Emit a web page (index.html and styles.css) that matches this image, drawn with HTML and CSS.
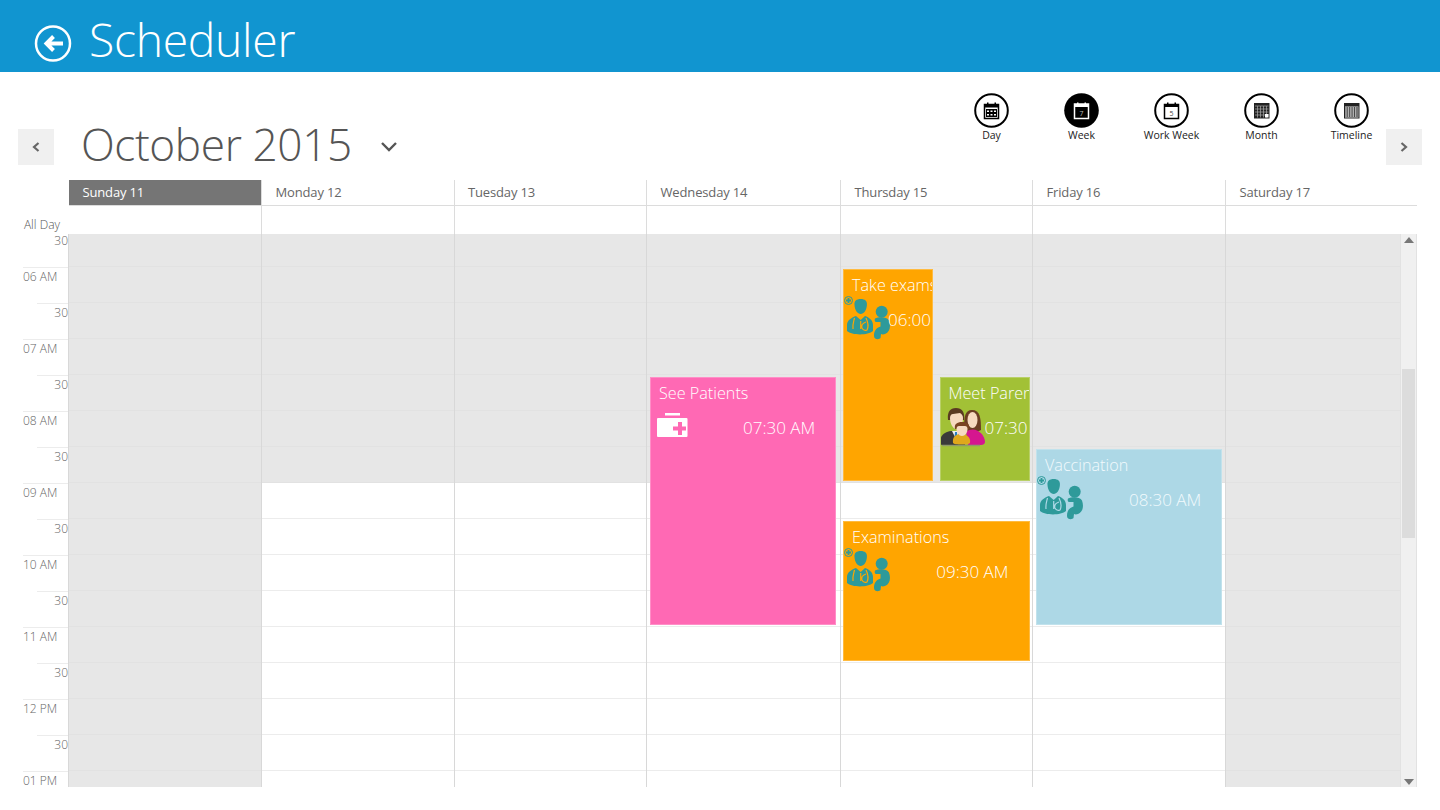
FILE: index.html
```html
<!DOCTYPE html>
<html lang="en">
<head>
<meta charset="utf-8">
<title>Scheduler</title>
<link rel="stylesheet" href="styles.css">
</head>
<body>
<svg class="defs" width="0" height="0" aria-hidden="true">
  <symbol id="doctor" viewBox="0 0 46 46">
    <circle cx="4.500" cy="4.500" r="4" fill="none" stroke="#2e9a9a" stroke-width="1"/>
    <path d="M4.500 2v5M2 4.500h5" stroke="#2e9a9a" stroke-width="1.800"/>
    <path d="M10.500 9C10 5 12.500 3 16.700 3s6.700 2 6.200 6c-.2 5-3 9-6.200 9s-6-4-6.200-9z" fill="#2e9a9a"/>
    <path d="M3 35v-6c0-5 5-7.500 9-9l4.700 4 4.300-4c4 1.500 8 4 8 9v6c-5 4.500-21 4.500-26 0z" fill="#2e9a9a"/>
    <path class="steth" d="M10.500 22c-1 4-2 6-1.500 11M16.700 25v8M22 22c2 4 3 8 1 12-2 1-4 0-5-2-1-3 1-5 4-6" fill="none" stroke-width="1.200"/>
    <circle cx="37.700" cy="15.700" r="6" fill="#2e9a9a"/>
    <path d="M31 22.500C35 20.500 43 20.500 45 24.500 47 30 46 36 41 38 39.500 38.500 38 38.500 37 38L36.500 42C35 44 30 43.500 30 40 30 35.500 31.500 32 36.500 30.500V26H32C30.500 25.500 30.500 23.500 31 22.500Z" fill="#2e9a9a"/>
  </symbol>
  <symbol id="family" viewBox="0 0 46 41">
    <path d="M24 24c0-14 1-20 8-20 8 0 9 8 9 20l-4 2H27z" fill="#6b3d23"/>
    <path d="M26 26c4-3 8-3 12-1 4 2 7 7 7 11 0 2-2 3-4 3H28z" fill="#d5168f"/>
    <ellipse cx="32.500" cy="14" rx="5" ry="8" fill="#f6d9c0"/>
    <path d="M0 36c0-7 5-10 11-11h10l4 5v9H3c-2 0-3-1-3-3z" fill="#3a3a3a"/>
    <path d="M12 25h8l-4 8z" fill="#f2f2f2"/>
    <path d="M15 26h2l.5 6-1.500 2-1.500-2z" fill="#2a7fc0"/>
    <path d="M8 14C7 6 10 2 16 2s9 4 8 12z" fill="#5a3a22"/>
    <path d="M10 12c0-2 1-4 3-4l7-1c2 1 3 3 3 5 0 6-3 11-6.500 11S10 18 10 12z" fill="#f6d9c0"/>
    <path d="M13 37c-1-6 3-9 8-9s10 3 9 9c-1 2-16 2-17 0z" fill="#e0a81c"/>
    <path d="M15 23c-1-5 2-7 7-7s8 2 7 7z" fill="#7a4422"/>
    <path d="M16.500 23c0-2 1-3 2.500-3h6c1.500 0 2.500 1 2.500 3 0 4-2.500 7-5.500 7s-5.500-3-5.500-7z" fill="#f6d9c0"/>
    <path d="M2 39.500h38" stroke="#8f9a6a" stroke-width="1.500"/>
  </symbol>
</svg>

<header class="app-bar">
  <svg class="back" viewBox="0 0 38 38" width="38" height="38" aria-hidden="true">
    <circle cx="19" cy="19.500" r="17" fill="none" stroke="#fff" stroke-width="2.500"/>
    <path d="M29 19.500H13M19.500 12.500l-7 7 7 7" fill="none" stroke="#fff" stroke-width="4"/>
  </svg>
  <h1 class="app-title">Scheduler</h1>
</header>

<section class="toolbar">
  <button class="nav-btn" type="button" aria-label="Previous">
    <svg viewBox="0 0 8 10" width="8" height="10"><path d="M6.500 1 2 5l4.500 4" fill="none" stroke="#666" stroke-width="2.200"/></svg>
  </button>
  <h2 class="month">October 2015</h2>
  <svg class="month-caret" viewBox="0 0 16 11" width="16" height="11" aria-hidden="true"><path d="M1 2l7 7 7-7" fill="none" stroke="#555" stroke-width="2.400"/></svg>
  <nav class="views">
    <div class="view">
      <svg viewBox="0 0 35 35" width="35" height="35"><circle cx="17.500" cy="17.500" r="16.300" fill="#fff" stroke="#000" stroke-width="2"/><path d="M10.500 11.500h14v14h-14z" fill="#fff" stroke="#000" stroke-width="1.500"/><path d="M10.500 11h14v3.500h-14zM13 9.500h1.500v2H13zM20.500 9.500H22v2h-1.500zM12 16h11v8H12z" fill="#000"/><path d="M13 17.500h2v1.500h-2zM16.500 17.500h2v1.500h-2zM20 17.500h2v1.500h-2zM13 21h2v1.500h-2zM16.500 21h2v1.500h-2zM20 21h2v1.500h-2z" fill="#fff"/></svg>
      <span class="view-label">Day</span>
    </div>
    <div class="view">
      <svg viewBox="0 0 35 35" width="35" height="35"><circle cx="17.500" cy="17.500" r="17.300" fill="#000"/><path d="M10.500 11h14v14.500h-14z" fill="#000" stroke="#fff" stroke-width="1.500"/><path d="M10 11h15v3H10zM13 9.500h1.500v2H13zM20.500 9.500H22v2h-1.500z" fill="#fff"/><text class="glyph-day is-on" x="17.500" y="22.500">7</text></svg>
      <span class="view-label">Week</span>
    </div>
    <div class="view">
      <svg viewBox="0 0 35 35" width="35" height="35"><circle cx="17.500" cy="17.500" r="16.300" fill="#fff" stroke="#000" stroke-width="2"/><path d="M10.500 11.500h14v14h-14z" fill="#fff" stroke="#000" stroke-width="1.500"/><path d="M10.500 11h14v3h-14zM13 9.500h1.500v2H13zM20.500 9.500H22v2h-1.500z" fill="#000"/><text class="glyph-day" x="17.500" y="22.500">5</text></svg>
      <span class="view-label">Work Week</span>
    </div>
    <div class="view">
      <svg viewBox="0 0 35 35" width="35" height="35"><circle cx="17.500" cy="17.500" r="16.300" fill="#fff" stroke="#000" stroke-width="2"/><path d="M10 10h15.500v15.500H10z" fill="#222"/><path d="M11 13h13.500M11 16h13.500M11 19h13.500M11 22h13.500M13.500 13v11.500M16.500 13v11.500M19.500 13v11.500M22.500 13v11.500" stroke="#aaa" stroke-width=".7"/><path d="M21 21h3.500v3.500H21z" fill="#fff"/></svg>
      <span class="view-label">Month</span>
    </div>
    <div class="view">
      <svg viewBox="0 0 35 35" width="35" height="35"><circle cx="17.500" cy="17.500" r="16.300" fill="#fff" stroke="#000" stroke-width="2"/><path d="M10 10h15.500v15.500H10z" fill="#222"/><path d="M11 13.500h13.500v11H11z" fill="#ddd"/><path d="M12 14v10M13.700 14v10M15.400 14v10M17.100 14v10M18.800 14v10M20.500 14v10M22.200 14v10M23.800 14v10" stroke="#222" stroke-width=".8"/></svg>
      <span class="view-label">Timeline</span>
    </div>
  </nav>
  <button class="nav-btn" type="button" aria-label="Next">
    <svg viewBox="0 0 8 10" width="8" height="10"><path d="M1.500 1 6 5 1.500 9" fill="none" stroke="#666" stroke-width="2.200"/></svg>
  </button>
</section>

<main class="calendar">
  <div class="corner"></div>
  <div class="day-head is-today">Sunday 11</div>
  <div class="day-head">Monday 12</div>
  <div class="day-head">Tuesday 13</div>
  <div class="day-head">Wednesday 14</div>
  <div class="day-head">Thursday 15</div>
  <div class="day-head">Friday 16</div>
  <div class="day-head span-2">Saturday 17</div>

  <div class="all-day-label">All Day</div>
  <div class="all-day"></div>
  <div class="all-day"></div>
  <div class="all-day"></div>
  <div class="all-day"></div>
  <div class="all-day"></div>
  <div class="all-day"></div>
  <div class="all-day span-2"></div>

  <div class="gutter">
    <div class="tick half first">30</div>
    <div class="tick">06 AM</div>
    <div class="tick half">30</div>
    <div class="tick">07 AM</div>
    <div class="tick half">30</div>
    <div class="tick">08 AM</div>
    <div class="tick half">30</div>
    <div class="tick">09 AM</div>
    <div class="tick half">30</div>
    <div class="tick">10 AM</div>
    <div class="tick half">30</div>
    <div class="tick">11 AM</div>
    <div class="tick half">30</div>
    <div class="tick">12 PM</div>
    <div class="tick half">30</div>
    <div class="tick end">01 PM</div>
  </div>

  <div class="day"><div class="off full"></div></div>
  <div class="day"><div class="off"></div></div>
  <div class="day"><div class="off"></div></div>
  <div class="day">
    <div class="off"></div>
    <article class="event pink see-patients">
      <div class="event-title">See Patients</div>
      <div class="event-row">
        <svg class="kit" viewBox="0 0 31 25" width="31" height="25" aria-hidden="true">
          <path d="M8 0h15v2.500H8z" fill="#fff"/>
          <path d="M1 5h28.500a1 1 0 0 1 1 1v17a1 1 0 0 1-1 1H1a1 1 0 0 1-1-1V6a1 1 0 0 1 1-1z" fill="#fff"/>
          <path d="M21 9h4v4.500h4v4h-4V22h-4v-4.500h-5v-4h5z" fill="#ff69b4"/>
        </svg>
        <span class="event-time">07:30 AM</span>
      </div>
    </article>
  </div>
  <div class="day">
    <div class="off"></div>
    <article class="event orange take-exams">
      <div class="event-title">Take exams</div>
      <div class="event-row">
        <svg class="pic" aria-hidden="true"><use href="#doctor"/></svg>
        <span class="event-time">06:00 AM</span>
      </div>
    </article>
    <article class="event green meet-parents">
      <div class="event-title">Meet Parents</div>
      <div class="event-row">
        <svg class="pic family" aria-hidden="true"><use href="#family"/></svg>
        <span class="event-time">07:30 AM</span>
      </div>
    </article>
    <article class="event orange examinations">
      <div class="event-title">Examinations</div>
      <div class="event-row">
        <svg class="pic" aria-hidden="true"><use href="#doctor"/></svg>
        <span class="event-time">09:30 AM</span>
      </div>
    </article>
  </div>
  <div class="day">
    <div class="off"></div>
    <article class="event blue vaccination">
      <div class="event-title">Vaccination</div>
      <div class="event-row">
        <svg class="pic" aria-hidden="true"><use href="#doctor"/></svg>
        <span class="event-time">08:30 AM</span>
      </div>
    </article>
  </div>
  <div class="day last"><div class="off full"></div></div>

  <div class="scrollbar" aria-hidden="true">
    <span class="arrow up"></span>
    <span class="thumb"></span>
    <span class="arrow down"></span>
  </div>
</main>
</body>
</html>
```

FILE: styles.css
```css
* { box-sizing: border-box; }

html, body { margin: 0; padding: 0; }

body {
  width: 1440px;
  height: 810px;
  overflow: hidden;
  background: #fff;
  font-family: "Open Sans", "Liberation Sans", sans-serif;
  color: #666;
}

.defs { position: absolute; }

/* App bar */
.app-bar {
  height: 72px;
  background: #1195d0;
  display: flex;
  align-items: flex-start;
  padding: 24px 0 0 34px;
}

.back { flex: none; }

.app-title {
  margin: -16px 0 0 17px;
  font-size: 46.3px;
  line-height: 64px;
  font-weight: 300;
  color: #fff;
  letter-spacing: -0.3px;
}

/* Toolbar */
.toolbar {
  height: 108px;
  display: flex;
  align-items: flex-start;
  padding: 0 18px;
}

.nav-btn {
  flex: none;
  width: 36px;
  height: 36px;
  margin-top: 57px;
  padding: 0;
  border: 0;
  background: #f0f0f0;
  display: flex;
  align-items: center;
  justify-content: center;
}

.month {
  margin: 42px 0 0 27px;
  font-size: 44.2px;
  line-height: 60px;
  font-weight: 300;
  color: #555;
  letter-spacing: -0.4px;
}

.month-caret {
  flex: none;
  margin: 69px 0 0 29px;
}

.views {
  margin-left: auto;
  margin-right: 0.5px;
  display: flex;
  gap: 22px;
  padding-top: 21px;
}

.view {
  width: 68px;
  display: flex;
  flex-direction: column;
  align-items: center;
}

.view svg { display: block; }

.view-label {
  margin-top: -1px;
  font-size: 10.5px;
  line-height: 16px;
  color: #222;
  white-space: nowrap;
}

.glyph-day {
  font-size: 7px;
  text-anchor: middle;
  fill: #444;
  font-family: "Open Sans", sans-serif;
}

.glyph-day.is-on { fill: #bbb; }

/* Calendar grid */
.calendar {
  width: 1417px;
  display: grid;
  grid-template-columns: 69px 193px 192.5px 192.5px 194px 192px 193px 174px 17px;
  grid-template-rows: 26px 28px 553px;
}

.span-2 { grid-column: span 2; }

.day-head {
  padding-left: 13.5px;
  border-right: 1px solid #dcdcdc;
  border-bottom: 1px solid #dcdcdc;
  font-size: 13px;
  line-height: 25px;
  letter-spacing: -0.15px;
  color: #666;
  white-space: nowrap;
}

.day-head.span-2 { border-right: 0; }

.day-head.is-today {
  background: #757575;
  color: #fff;
}

.all-day-label {
  padding: 11px 9px 0 0;
  font-size: 12px;
  font-weight: 300;
  line-height: 16px;
  color: #555;
  text-align: right;
}

.all-day { border-right: 1px solid #dcdcdc; }
.all-day.span-2 { border-right: 0; }

.gutter {
  border-right: 1px solid #d8d8d8;
  background: #fff;
}

.tick {
  height: 36px;
  margin-left: 23px;
  padding-top: 1px;
  border-top: 1px solid #ececec;
  font-size: 12px;
  font-weight: 300;
  line-height: 16px;
  color: #666;
  white-space: nowrap;
}

.tick.half {
  margin-left: 37px;
  text-align: right;
}

.tick.first {
  height: 33px;
  border-top: 0;
  padding-top: 0;
  line-height: 14px;
}

.tick.end { height: 16px; }

.day {
  position: relative;
  overflow: hidden;
  border-right: 1px solid #d8d8d8;
  background-color: #fff;
  background-image: linear-gradient(transparent 35px, #ececec 35px);
  background-size: 100% 36px;
  background-position: 0 -3px;
}

.day.last { border-right: 0; }

.off {
  height: 249px;
  background-color: #e7e7e7;
  background-image: linear-gradient(transparent 35px, #e2e2e2 35px);
  background-size: 100% 36px;
  background-position: 0 -3px;
}

.off.full { height: 100%; }

/* Events */
.event {
  position: absolute;
  overflow: hidden;
  border: 1px solid rgba(255, 255, 255, 0.25);
  color: #fff;
  --detail: #ffa500;
}

.pink { background: #ff69b4; }
.orange { background: #ffa500; }
.green { background: #a2c136; --detail: #a2c136; }
.blue { background: #add8e6; color: #f2fafd; --detail: #add8e6; }

.see-patients { left: 3px; top: 143px; width: 186px; height: 248px; }
.take-exams { left: 2px; top: 35px; width: 90px; height: 212px; }
.meet-parents { left: 98.5px; top: 143px; width: 90px; height: 104px; }
.examinations { left: 2px; top: 287px; width: 186.5px; height: 140px; }
.vaccination { left: 3px; top: 215px; width: 186px; height: 176px; }

.event-title {
  padding: 3px 0 0 8px;
  font-size: 16.2px;
  line-height: 24px;
  font-weight: 300;
  white-space: nowrap;
}

.event-row {
  display: grid;
  grid-template-columns: minmax(0, 1fr) minmax(0, 1fr);
  height: 50px;
}

.event-time {
  margin-top: 11px;
  font-size: 17px;
  line-height: 24px;
  font-weight: 300;
  white-space: nowrap;
}

.kit { margin: 8px 0 0 6px; display: block; }

.pic {
  display: block;
  width: 46px;
  height: 46px;
  margin: -1px 0 0 0;
}

.pic.family {
  width: 46px;
  height: 41px;
  margin: 1px 0 0 -1px;
}

.steth { stroke: var(--detail); }

/* Scrollbar */
.scrollbar {
  display: flex;
  flex-direction: column;
  align-items: center;
  border: 1px solid #e2e2e2;
  border-width: 0 1px;
  background: #f0f0f0;
  padding: 0 1px;
  position: relative;
}

.thumb {
  position: absolute;
  top: 135px;
  left: 1px;
  right: 1px;
  height: 169px;
  background: #dcdcdc;
}

.arrow {
  width: 0;
  height: 0;
  border-left: 5.5px solid transparent;
  border-right: 5.5px solid transparent;
}

.arrow.up {
  margin-top: 3px;
  border-bottom: 6px solid #777;
}

.arrow.down {
  margin-top: auto;
  margin-bottom: 2px;
  border-top: 6px solid #777;
}
```
